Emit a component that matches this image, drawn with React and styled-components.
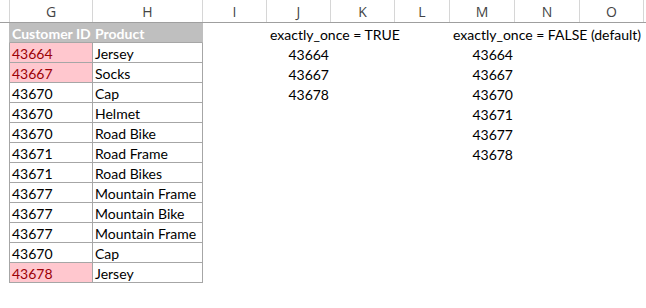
import React from "react";
import styled, { createGlobalStyle } from "styled-components";

const GlobalStyle = createGlobalStyle`
    html, body {
        margin: 0;
        padding: 0;
        background: #ffffff;
    }
    body {
        font-family: Lato, "Open Sans", sans-serif;
    }
`;

// widths of the sheet columns I..O, after the table columns G and H
const restCols = [
    { key: "I", w: 64 },
    { key: "J", w: 64 },
    { key: "K", w: 64 },
    { key: "L", w: 55 },
    { key: "M", w: 65 },
    { key: "N", w: 65 },
    { key: "O", w: 64 },
];

const rows = [
    { id: "43664", product: "Jersey", dup: true, j: "43664", m: "43664" },
    { id: "43667", product: "Socks", dup: true, j: "43667", m: "43667" },
    { id: "43670", product: "Cap", j: "43678", m: "43670" },
    { id: "43670", product: "Helmet", m: "43671" },
    { id: "43670", product: "Road Bike", m: "43677" },
    { id: "43671", product: "Road Frame", m: "43678" },
    { id: "43671", product: "Road Bikes" },
    { id: "43677", product: "Mountain Frame" },
    { id: "43677", product: "Mountain Bike" },
    { id: "43677", product: "Mountain Frame" },
    { id: "43670", product: "Cap" },
    { id: "43678", product: "Jersey", dup: true },
];

const Sheet = styled.div`
    width: 646px;
    height: 308px;
    overflow: hidden;
    display: flex;
    flex-direction: column;
    font-size: 14px;
    color: #000;
`;

const Row = styled.div`
    display: flex;
    height: 20px;
    flex: none;
`;

const HeadRow = styled(Row)`
    height: 23px;
    border-bottom: 1px solid #9f9f9f;
    box-sizing: border-box;
`;

const Gutter = styled.div`
    flex: none;
    box-sizing: border-box;
    width: ${({ $w }) => $w}px;
    border-right: ${({ $line }) => ($line ? "1px solid #d6d6d6" : "none")};
`;

const ColHead = styled.div`
    flex: none;
    box-sizing: border-box;
    width: ${({ $w }) => $w}px;
    border-right: 1px solid #d6d6d6;
    display: flex;
    align-items: center;
    justify-content: center;
    color: #444;
    font-family: "Open Sans", sans-serif;
    font-size: 14px;
    padding-top: 1px;
`;

const Cell = styled.div`
    flex: none;
    box-sizing: border-box;
    width: ${({ $w }) => $w}px;
    height: 100%;
    display: flex;
    align-items: flex-end;
    justify-content: ${({ $right }) => ($right ? "flex-end" : "flex-start")};
    padding: 0 2px 0 3px;
    white-space: nowrap;
    line-height: 16px;
    overflow: visible;
`;

const TableCell = styled(Cell)`
    border-right: 1px solid #a6a6a6;
    border-bottom: 1px solid #a6a6a6;
    border-left: ${({ $first }) => ($first ? "1px solid #a6a6a6" : "none")};
    background: ${({ $dup }) => ($dup ? "#ffc7ce" : "#ffffff")};
    color: ${({ $dup }) => ($dup ? "#9c0006" : "#000")};
    padding-left: 2px;
`;

const TableHeadCell = styled(Cell)`
    background: #bfbfbf;
    color: #ffffff;
    font-weight: 700;
    border-bottom: 1px solid #a6a6a6;
    border-left: ${({ $first }) => ($first ? "1px solid #bfbfbf" : "none")};
    border-right: ${({ $last }) => ($last ? "1px solid #bfbfbf" : "none")};
    padding-left: 2px;
`;

const App = () => {
    const rest = (vals, head) =>
        restCols.map((c) => {
            const v = vals[c.key];
            return (
                <Cell key={c.key} $w={c.w} $right={!head && !!v}>
                    {v}
                </Cell>
            );
        });

    return (
        <Sheet>
            <GlobalStyle />
            <HeadRow>
                <Gutter $w={10} $line />
                <ColHead $w={83}>G</ColHead>
                <ColHead $w={110}>H</ColHead>
                {restCols.map((c) => (
                    <ColHead key={c.key} $w={c.w}>
                        {c.key}
                    </ColHead>
                ))}
            </HeadRow>
            <Row>
                <Gutter $w={9} />
                <TableHeadCell $w={84} $first>
                    Customer ID
                </TableHeadCell>
                <TableHeadCell $w={110} $last>
                    Product
                </TableHeadCell>
                {rest(
                    {
                        J: "exactly_once = TRUE",
                        M: "exactly_once = FALSE (default)",
                    },
                    true
                )}
            </Row>
            {rows.map((r, i) => (
                <Row key={i}>
                    <Gutter $w={9} />
                    <TableCell $w={84} $first $dup={r.dup}>
                        {r.id}
                    </TableCell>
                    <TableCell $w={110}>{r.product}</TableCell>
                    {rest({ J: r.j, M: r.m })}
                </Row>
            ))}
        </Sheet>
    );
};

export default App;
